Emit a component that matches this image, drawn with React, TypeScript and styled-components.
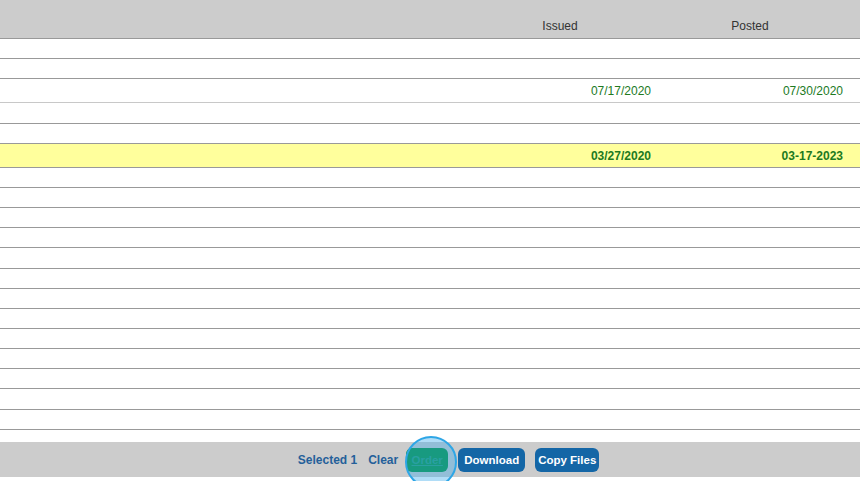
import React from "react";
import styled, { createGlobalStyle } from "styled-components";

const Global = createGlobalStyle`
  html, body { margin: 0; padding: 0; background: #fff; }
  body { font-family: "Liberation Sans", Arial, sans-serif; font-size: 12px; overflow: hidden; }
`;

const Page = styled.div`
  width: 860px;
  height: 481px;
  display: flex;
  flex-direction: column;
  overflow: hidden;
`;

const cols = "1fr 190px 190px 15px";

const Header = styled.div`
  display: grid;
  grid-template-columns: ${cols};
  height: 38px;
  background: #cccccc;
  border-bottom: 1px solid #999;
  box-sizing: content-box;
  flex-shrink: 0;
`;

const HeadCell = styled.div`
  display: flex;
  align-items: flex-end;
  justify-content: center;
  padding-bottom: 5px;
  color: #333;
  font-size: 12px;
`;

const Row = styled.div<{ $h: number; $hl?: boolean; $light?: boolean }>`
  display: grid;
  grid-template-columns: ${cols};
  height: ${(p) => p.$h}px;
  background: ${(p) => (p.$hl ? "#ffff9c" : "#fff")};
  border-bottom: 1px solid ${(p) => (p.$light ? "#c8c8c8" : "#999")};
  box-sizing: content-box;
  flex-shrink: 0;
`;

const DateCell = styled.div<{ $bold?: boolean; $pad: number }>`
  display: flex;
  align-items: center;
  justify-content: flex-end;
  padding-right: ${(p) => p.$pad}px;
  color: #217a1e;
  font-weight: ${(p) => (p.$bold ? 700 : 400)};
  font-size: 12px;
`;

const Spacer = styled.div`
  height: 12px;
  flex-shrink: 0;
`;

const Footer = styled.div`
  height: 35px;
  background: #cccccc;
  display: flex;
  align-items: center;
  justify-content: center;
  padding-left: 37px;
  box-sizing: border-box;
  flex-shrink: 0;
`;

const Label = styled.span<{ $gap: number }>`
  color: #24609a;
  font-weight: 700;
  font-size: 12px;
  margin-right: ${(p) => p.$gap}px;
`;

const Button = styled.button<{ $green?: boolean; $w: number; $last?: boolean }>`
  width: ${(p) => p.$w}px;
  height: 24px;
  padding: 0;
  border: none;
  border-radius: 6px;
  background: ${(p) => (p.$green ? "#008f3a" : "#1466a6")};
  color: #fff;
  font-family: "Liberation Sans", Arial, sans-serif;
  font-weight: 700;
  font-size: 11.5px;
  text-align: center;
  margin-right: ${(p) => (p.$last ? 0 : 10)}px;
  cursor: pointer;
`;

const OrderWrap = styled.span`
  position: relative;
  display: inline-flex;
`;

const OrderText = styled.span`
  color: #1e9a72;
  text-decoration: underline;
`;

const Halo = styled.span`
  position: absolute;
  left: -1px;
  top: -12px;
  width: 48px;
  height: 48px;
  border-radius: 50%;
  border: 2px solid #2ea6e6;
  background: rgba(60, 170, 235, 0.4);
  pointer-events: none;
`;

type R = { issued?: string; posted?: string; bold?: boolean; hl?: boolean; light?: boolean; h?: number };

const rows: R[] = [
  {},
  {},
  { issued: "07/17/2020", posted: "07/30/2020", light: true },
  { h: 20 },
  {},
  { issued: "03/27/2020", posted: "03-17-2023", bold: true, hl: true },
  {},
  {},
  {},
  {},
  { h: 20 },
  {},
  {},
  {},
  {},
  {},
  {},
  { h: 20 },
  {},
];

export default function App() {
  return (
    <Page>
      <Global />
      <Header>
        <div />
        <HeadCell>Issued</HeadCell>
        <HeadCell>Posted</HeadCell>
        <div />
      </Header>
      {rows.map((r, i) => (
        <Row key={i} $h={r.h ?? (r.issued ? 23 : 19)} $hl={r.hl} $light={r.light}>
          <div />
          <DateCell $bold={r.bold} $pad={4}>{r.issued}</DateCell>
          <DateCell $bold={r.bold} $pad={2}>{r.posted}</DateCell>
          <div />
        </Row>
      ))}
      <Spacer />
      <Footer>
        <Label $gap={11}>Selected 1</Label>
        <Label $gap={8}>Clear</Label>
        <OrderWrap>
          <Button $green $w={42}>
            <OrderText>Order</OrderText>
          </Button>
          <Halo />
        </OrderWrap>
        <Button $w={67}>Download</Button>
        <Button $w={64} $last>Copy Files</Button>
      </Footer>
    </Page>
  );
}
